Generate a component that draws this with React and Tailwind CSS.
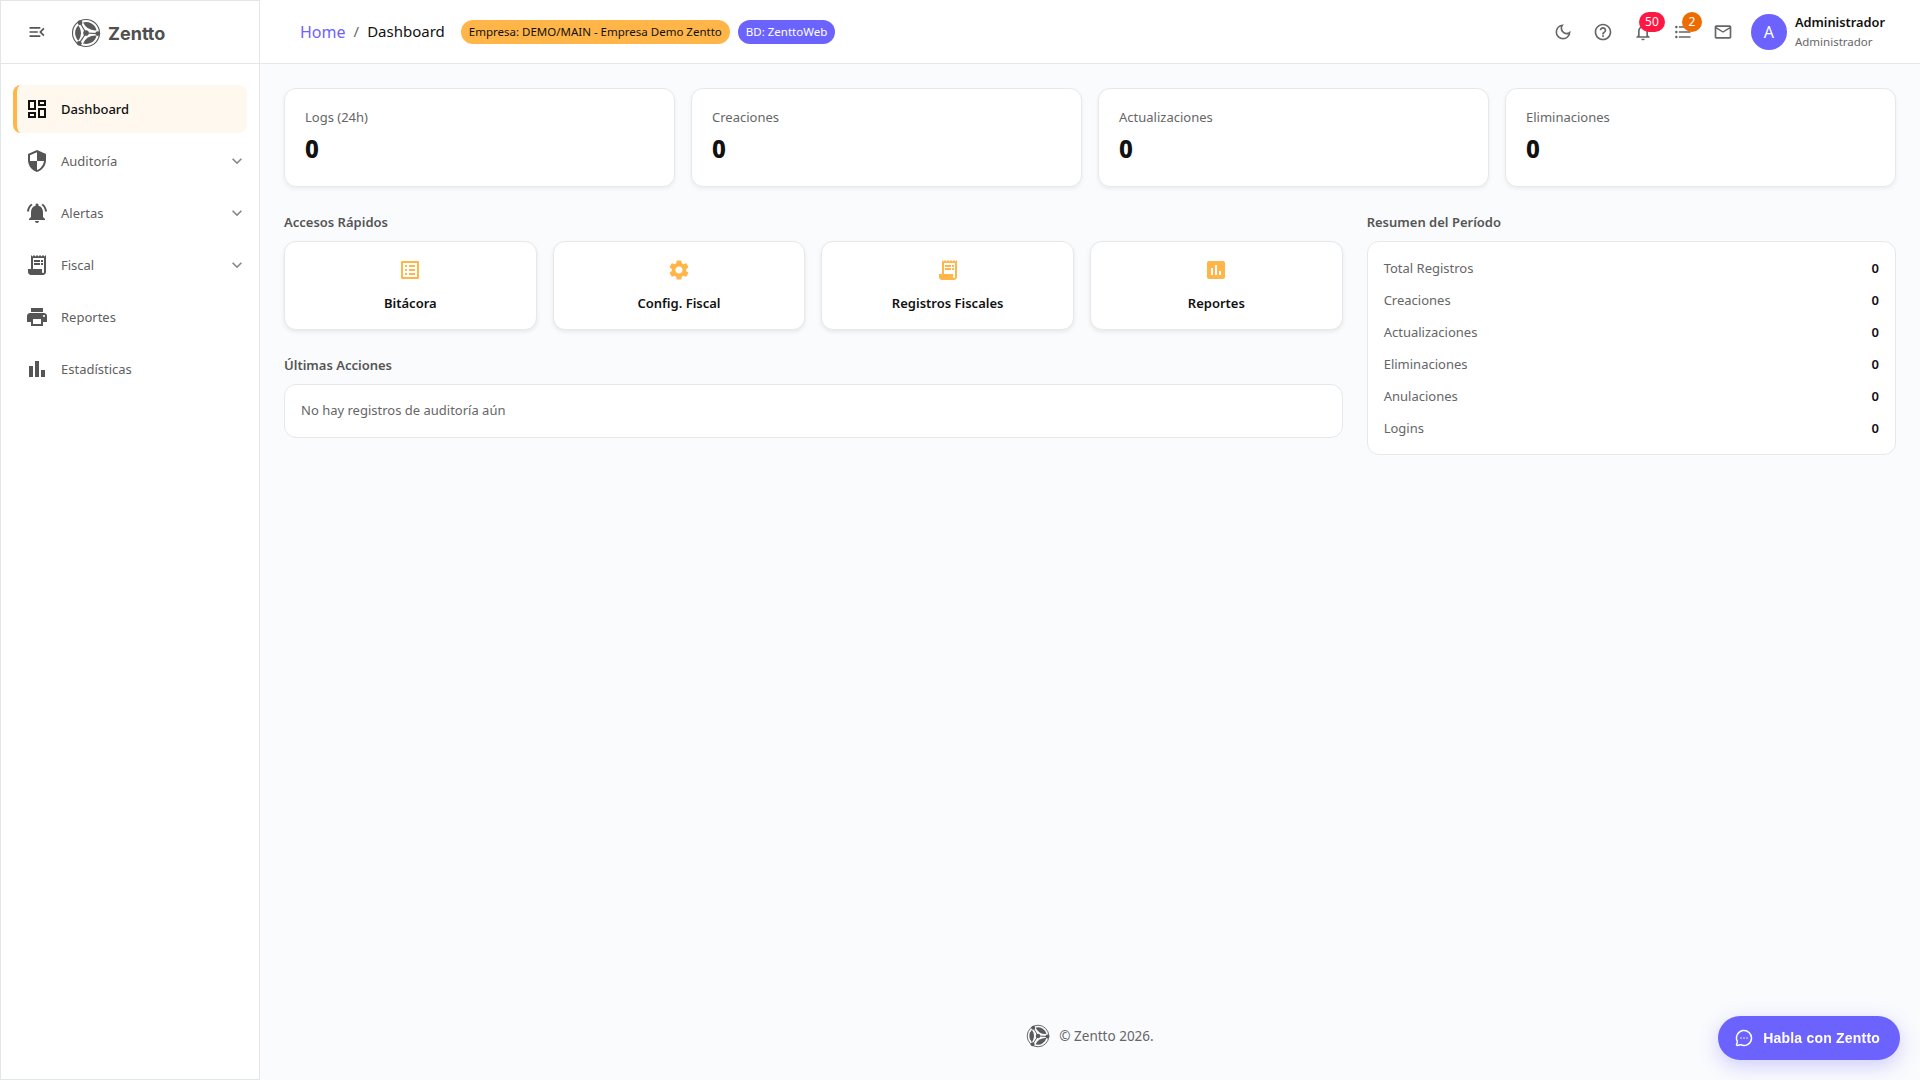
import React from "react";
import {
  MdMenuOpen, MdOutlineDashboard, MdSecurity, MdNotificationsActive, MdReceiptLong, MdPrint, MdBarChart,
  MdExpandMore, MdOutlineDarkMode, MdHelpOutline, MdOutlineNotifications, MdFormatListBulleted, MdOutlineMail,
  MdOutlineListAlt, MdSettings, MdAssessment,
} from "react-icons/md";
import { MessageCircleMore } from "lucide-react";

const pol = (deg, r) => {
  const t = (deg * Math.PI) / 180;
  return [16 + r * Math.cos(t), 16 + r * Math.sin(t)].map((n) => n.toFixed(2)).join(" ");
};
const blade = (a) => `M${pol(a - 46, 11.6)} A11.6 11.6 0 0 1 ${pol(a + 46, 11.6)} Q${pol(a, 2.5)} ${pol(a - 46, 11.6)}Z`;

function Logo({ className }) {
  return (
    <svg viewBox="0 0 32 32" className={className} fill="#5a5a5a">
      <circle cx="16" cy="16" r="14.4" fill="none" stroke="#5a5a5a" strokeWidth="1.2" />
      <path d={blade(-60)} />
      <path d={blade(60)} />
      <path d={blade(180)} />
      <g stroke="#ffffff" strokeWidth="2.6">
        <path d="M16 16 L9.4 4.6" />
        <path d="M16 16 L29 16.6" />
        <path d="M16 16 L8.8 27" />
      </g>
      <g stroke="#5a5a5a" strokeWidth="1.3">
        <path d="M16 16 L9.4 4.6" />
        <path d="M16 16 L29 16.6" />
        <path d="M16 16 L8.8 27" />
      </g>
      <circle cx="16" cy="16" r="3" />
      <circle cx="9.6" cy="5" r="2.6" />
      <circle cx="28.6" cy="16.6" r="2.6" />
      <circle cx="8.8" cy="27" r="2.6" />
    </svg>
  );
}

const menu = [
  { label: "Dashboard", Icon: MdOutlineDashboard, active: true },
  { label: "Auditoría", Icon: MdSecurity, chevron: true },
  { label: "Alertas", Icon: MdNotificationsActive, chevron: true },
  { label: "Fiscal", Icon: MdReceiptLong, chevron: true },
  { label: "Reportes", Icon: MdPrint },
  { label: "Estadísticas", Icon: MdBarChart },
];

const stats = ["Logs (24h)", "Creaciones", "Actualizaciones", "Eliminaciones"];
const quick = [
  { label: "Bitácora", Icon: MdOutlineListAlt },
  { label: "Config. Fiscal", Icon: MdSettings },
  { label: "Registros Fiscales", Icon: MdReceiptLong },
  { label: "Reportes", Icon: MdAssessment },
];
const resumen = ["Total Registros", "Creaciones", "Actualizaciones", "Eliminaciones", "Anulaciones", "Logins"];

function Sidebar() {
  return (
    <aside className="w-[260px] shrink-0 h-full bg-white border border-[#e3e5e8] flex flex-col">
      <div className="h-[63px] shrink-0 border-b border-[#e3e5e8] flex items-center pl-[26px]">
        <MdMenuOpen className="text-[20px] text-[#555]" />
        <Logo className="w-[30px] h-[30px] ml-[24px] mt-[1px]" />
        <span className="ml-[7px] text-[18px] font-bold text-[#4f4f4f] font-['Inter',sans-serif] mt-[2px]">Zentto</span>
      </div>
      <nav className="flex flex-col gap-1 pt-[21px] pl-3 pr-3">
        {menu.map(({ label, Icon, active, chevron }) => (
          <div
            key={label}
            className={
              active
                ? "h-12 flex items-center rounded-lg border-l-4 border-[#ffb547] bg-[#fff8ee] pl-[8px] text-[#111]"
                : "h-12 flex items-center rounded-lg pl-[12px] text-[#5f5f5f]"
            }
          >
            <Icon className={active ? "text-[24px] text-[#111]" : "text-[24px] text-[#555]"} />
            <span className={active ? "ml-[12px] mt-[1px] text-[13px] font-medium" : "ml-[12px] mt-[1px] text-[13px]"}>{label}</span>
            {chevron && <MdExpandMore className="ml-auto text-[20px] text-[#888]" />}
          </div>
        ))}
      </nav>
    </aside>
  );
}

function Header() {
  return (
    <header className="h-16 shrink-0 bg-white border-b border-[#e6e8eb] flex items-center pl-10 pr-[35px]">
      <span className="text-[16px] text-[#6c63ff]">Home</span>
      <span className="text-[15px] text-[#666] mx-2">/</span>
      <span className="text-[15px] text-[#111]">Dashboard</span>
      <span className="ml-4 h-6 flex items-center rounded-full bg-[#ffb547] px-2 text-[11.5px] text-[#111]">Empresa: DEMO/MAIN - Empresa Demo Zentto</span>
      <span className="ml-2 h-6 flex items-center rounded-full bg-[#6c63ff] px-2 text-[11.5px] text-white">BD: ZenttoWeb</span>
      <div className="ml-auto flex items-center">
        <div className="w-10 flex justify-center"><MdOutlineDarkMode className="text-[20px] text-[#666]" /></div>
        <div className="w-10 flex justify-center"><MdHelpOutline className="text-[20px] text-[#666]" /></div>
        <div className="relative w-10 flex justify-center">
          <MdOutlineNotifications className="text-[20px] text-[#666]" />
          <span className="absolute left-[16px] top-[-10px] h-5 min-w-[26px] rounded-full bg-[#ff1744] text-white text-[12px] flex items-center justify-center px-1">50</span>
        </div>
        <div className="relative w-10 flex justify-center">
          <MdFormatListBulleted className="text-[20px] text-[#666]" />
          <span className="absolute left-[19px] top-[-10px] h-5 w-5 rounded-full bg-[#ed6c02] text-white text-[12px] flex items-center justify-center">2</span>
        </div>
        <div className="w-10 flex justify-center"><MdOutlineMail className="text-[20px] text-[#666]" /></div>
        <div className="ml-2 w-9 h-9 rounded-full bg-[#6c63ff] text-white text-[16px] flex items-center justify-center">A</div>
        <div className="ml-2 flex flex-col">
          <span className="text-[12.8px] font-semibold text-[#111] leading-[20px]">Administrador</span>
          <span className="text-[11.5px] text-[#666] leading-[20px]">Administrador</span>
        </div>
      </div>
    </header>
  );
}

function SectionTitle({ children }) {
  return <h2 className="text-[13px] font-semibold text-[#555] leading-[20px] mb-[9px]">{children}</h2>;
}

function Main() {
  return (
    <main className="flex-1 min-w-0 flex flex-col p-6 pb-0">
      <div className="grid grid-cols-4 gap-4">
        {stats.map((s) => (
          <div key={s} className="h-[99px] bg-white rounded-xl border border-[#e6e8eb] shadow-[0_2px_4px_rgba(0,0,0,0.06)] px-5 pt-[18px]">
            <div className="text-[13px] text-[#666] leading-[20px]">{s}</div>
            <div className="text-[24px] font-extrabold text-[#111] leading-[32px] mt-[6px]">0</div>
          </div>
        ))}
      </div>
      <div className="grid grid-cols-[2fr_1fr] gap-6 mt-[25px]">
        <div className="flex flex-col">
          <SectionTitle>Accesos Rápidos</SectionTitle>
          <div className="grid grid-cols-4 gap-4">
            {quick.map(({ label, Icon }) => (
              <div key={label} className="h-[89px] bg-white rounded-xl border border-[#e6e8eb] shadow-[0_2px_4px_rgba(0,0,0,0.08)] flex flex-col items-center pt-[16px]">
                <Icon className="text-[24px] text-[#ffb547]" />
                <span className="mt-[11px] text-[13px] font-semibold text-[#111] leading-[20px]">{label}</span>
              </div>
            ))}
          </div>
          <div className="mt-[25px]">
            <SectionTitle>Últimas Acciones</SectionTitle>
            <div className="h-[54px] bg-white rounded-xl border border-[#e6e8eb] flex items-center px-4 text-[13px] text-[#666]">
              No hay registros de auditoría aún
            </div>
          </div>
        </div>
        <div className="flex flex-col">
          <SectionTitle>Resumen del Período</SectionTitle>
          <div className="h-[214px] bg-white rounded-xl border border-[#e6e8eb] px-4 pt-[11px] flex flex-col">
            {resumen.map((r) => (
              <div key={r} className="h-8 flex items-center justify-between text-[13px]">
                <span className="text-[#666]">{r}</span>
                <span className="font-semibold text-[#111]">0</span>
              </div>
            ))}
          </div>
        </div>
      </div>
      <footer className="mt-auto mb-[32px] flex items-center justify-center gap-[9px]">
        <Logo className="w-6 h-6" />
        <span className="text-[13.5px] text-[#666]">© Zentto 2026.</span>
      </footer>
    </main>
  );
}

export default function App() {
  return (
    <div className="w-[1920px] h-[1080px] overflow-hidden flex bg-[#fafbfd] font-['Noto_Sans',sans-serif]">
      <Sidebar />
      <div className="flex-1 min-w-0 flex flex-col">
        <Header />
        <Main />
      </div>
      <button className="fixed right-5 bottom-5 h-11 rounded-full bg-[#6c63ff] text-white flex items-center gap-[10px] pl-[17px] pr-[20px] text-[14px] font-bold tracking-[0.2px] font-['Liberation_Sans',sans-serif] shadow-[0_6px_20px_rgba(108,99,255,0.3)]">
        <MessageCircleMore size={18} />
        Habla con Zentto
      </button>
    </div>
  );
}
